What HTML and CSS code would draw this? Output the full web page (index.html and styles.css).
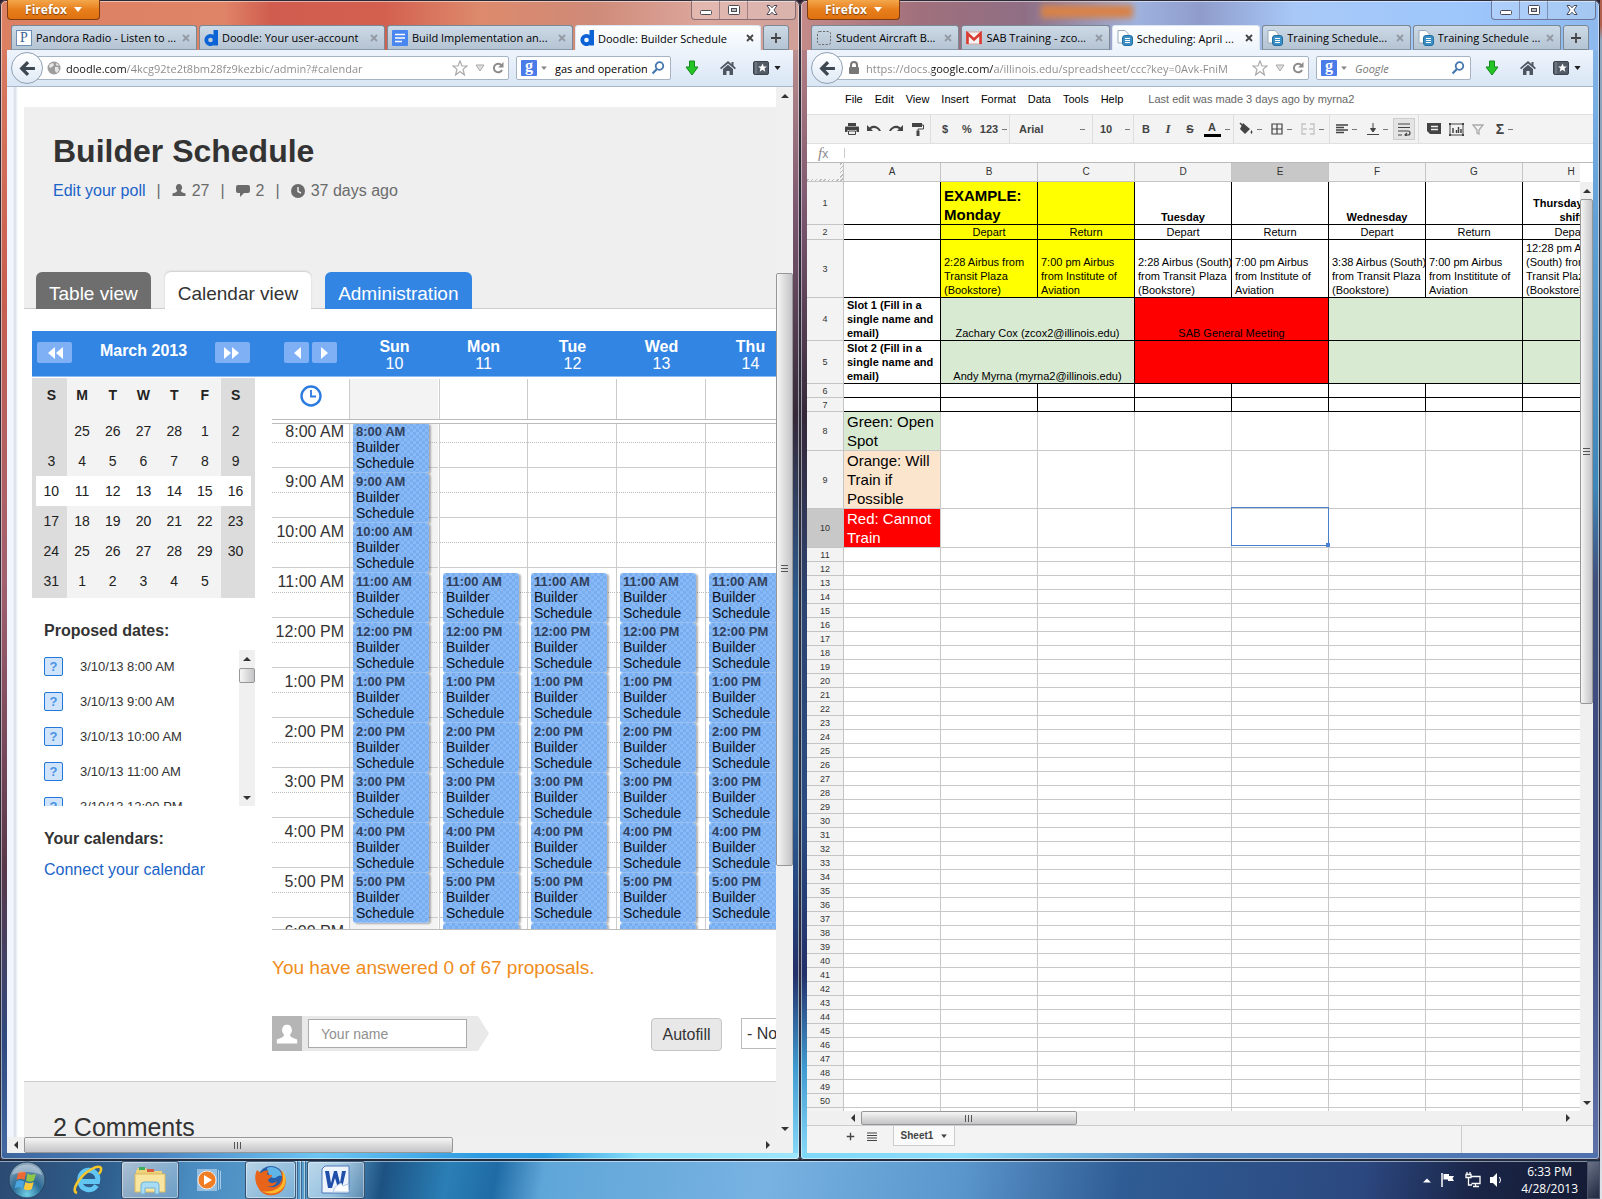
FILE: index.html
```html
<!DOCTYPE html>
<html lang="en">
<head>
<meta charset="utf-8">
<title>Builder Schedule</title>
<link rel="stylesheet" href="styles.css">
</head>
<body>
<svg width="0" height="0" class="defs" aria-hidden="true">
  <symbol id="i-min" viewBox="0 0 14 14"><rect x="1.500" y="7.500" width="11" height="4" rx="1" fill="#fff" stroke="#4a4a55"/></symbol>
  <symbol id="i-max" viewBox="0 0 14 14"><rect x="1.500" y="2.500" width="11" height="9" rx="1" fill="#fff" stroke="#4a4a55"/><rect x="4.500" y="5.500" width="5" height="3" fill="#bbb" stroke="#4a4a55"/></symbol>
  <symbol id="i-close" viewBox="0 0 14 14"><path d="M2 2.500h3l2 2.300 2-2.300h3L9 7l3 4.500H9L7 9.200 5 11.500H2L5 7z" fill="#fff" stroke="#4a4a55"/></symbol>
  <symbol id="i-x" viewBox="0 0 8 8"><path d="M1 1l6 6M7 1L1 7" stroke="currentColor" stroke-width="1.800"/></symbol>
  <symbol id="i-plus" viewBox="0 0 12 12"><path d="M6 1v10M1 6h10" stroke="currentColor" stroke-width="1.800"/></symbol>
  <symbol id="i-back" viewBox="0 0 16 16"><path d="M15 8H3M8.500 2L2.500 8l6 6" fill="none" stroke="#3c4752" stroke-width="3"/></symbol>
  <symbol id="i-globe" viewBox="0 0 14 14"><circle cx="7" cy="7" r="6.500" fill="#9d9d9d"/><path d="M3 3l3-1 1 2-2 2-2 1-1-2zM8 6l3 0 1 3-2 3-2-2zM9 2l3 2-1 1-2-1z" fill="#e6e6e6"/></symbol>
  <symbol id="i-lock" viewBox="0 0 12 14"><path d="M3 7V4a3 3 0 0 1 6 0v3" fill="none" stroke="#777" stroke-width="2"/><rect x="1" y="6" width="10" height="7" rx="1" fill="#777"/></symbol>
  <symbol id="i-star" viewBox="0 0 16 16"><path d="M8 1l2 5h5l-4 3.400L12.500 15 8 11.600 3.500 15 5 9.400 1 6h5z" fill="#fff" stroke="#aaa" stroke-width="1.200"/></symbol>
  <symbol id="i-tri" viewBox="0 0 10 8"><path d="M1 1h8L5 7z" fill="#ddd" stroke="#aaa"/></symbol>
  <symbol id="i-caret" viewBox="0 0 8 5"><path d="M0 0h8L4 5z" fill="currentColor"/></symbol>
  <symbol id="i-reload" viewBox="0 0 12 12"><path d="M9.500 3.300A4.300 4.300 0 1 0 10 8" fill="none" stroke="#8b8b8b" stroke-width="2"/><path d="M11.500 0v5.500H6z" fill="#8b8b8b"/></symbol>
  <symbol id="i-search" viewBox="0 0 14 14"><circle cx="8.500" cy="5" r="3.800" fill="#fff" stroke="#4477b0" stroke-width="1.800"/><path d="M6 8l-4.500 4.500" stroke="#4477b0" stroke-width="2.200"/></symbol>
  <symbol id="i-down" viewBox="0 0 14 16"><path d="M4.500 1h5v6H13L7 15 1 7h3.500z" fill="#24c426" stroke="#118a18"/></symbol>
  <symbol id="i-home" viewBox="0 0 16 16"><path d="M0 8l8-7 8 7-1.200 1.200L8 3.400 1.200 9.200z" fill="#4c5560"/><path d="M3 9l5-4.200L13 9v6h-3.500v-4h-3v4H3z" fill="#4c5560"/><rect x="11.500" y="2" width="2" height="4" fill="#4c5560"/></symbol>
  <symbol id="i-mark" viewBox="0 0 16 14"><rect x=".5" y=".5" width="15" height="13" rx="1.500" fill="#525b66" stroke="#3b444d"/><path d="M3 1v12" stroke="#8b939b"/><path d="M9.500 2.500l1.300 3h3l-2.300 2 .8 3.200-2.800-1.900-2.800 1.900.8-3.200-2.300-2h3z" fill="#fff"/></symbol>
  <symbol id="i-doodle" viewBox="0 0 14 16"><path d="M9.500 0H14v15.500H9.500z" fill="#0d63d6"/><circle cx="6.500" cy="10" r="4.200" fill="none" stroke="#0d63d6" stroke-width="3.800"/></symbol>
  <symbol id="i-doc" viewBox="0 0 16 16"><rect width="16" height="16" rx="1" fill="#4a86f0"/><path d="M3 4.500h10M3 8h10M3 11.500h7" stroke="#fff" stroke-width="1.500"/></symbol>
  <symbol id="i-dash" viewBox="0 0 16 16"><rect x="1.500" y="1.500" width="13" height="13" rx="2" fill="none" stroke="#666" stroke-dasharray="2 1.500"/></symbol>
  <symbol id="i-mail" viewBox="0 0 16 14"><rect x=".5" y="1" width="15" height="12" fill="#f7f3f3" stroke="#d8a5a0"/><path d="M1.500 13V2.500L8 8.500l6.500-6V13" fill="none" stroke="#d93a32" stroke-width="2.600"/></symbol>
  <symbol id="i-sheet" viewBox="0 0 16 16"><path d="M1 .5h7l3 3V13H1z" fill="#fff" stroke="#9aa9b8"/><rect x="5.500" y="5.500" width="10" height="10" rx="2.500" fill="#3c8fc4" stroke="#1f6fa5"/><path d="M8 8.500h5M8 10.500h5M8 12.500h5" stroke="#fff"/></symbol>
  <symbol id="i-up" viewBox="0 0 8 4"><path d="M0 4l4-4 4 4z" fill="#333"/></symbol>
  <symbol id="i-user" viewBox="0 0 14 14"><path d="M7 0a3 3.500 0 0 1 2 6.200c0 1.500.3 2 4.500 3.300V12H.5V9.500C4.700 8.200 5 7.700 5 6.200A3 3.500 0 0 1 7 0z" fill="currentColor"/></symbol>
  <symbol id="i-chat" viewBox="0 0 14 12"><path d="M2 0h10a2 2 0 0 1 2 2v4a2 2 0 0 1-2 2H8l-4 4V8H2a2 2 0 0 1-2-2V2a2 2 0 0 1 2-2z" fill="#6b6b6b"/></symbol>
  <symbol id="i-time" viewBox="0 0 14 14"><circle cx="7" cy="7" r="7" fill="#6b6b6b"/><path d="M7 3v4.500l3 1.500" fill="none" stroke="#eee" stroke-width="1.500"/></symbol>
  <symbol id="i-clock" viewBox="0 0 22 22"><circle cx="11" cy="11" r="9.500" fill="#fff" stroke="#2c7be0" stroke-width="2.400"/><path d="M11 5v6.500h5" fill="none" stroke="#2c7be0" stroke-width="1.800"/></symbol>
  <symbol id="i-prev" viewBox="0 0 8 12"><path d="M8 0v12L1 6z" fill="#fff"/></symbol>
  <symbol id="i-next" viewBox="0 0 8 12"><path d="M0 0v12l7-6z" fill="#fff"/></symbol>
</svg>

<main class="desktop">
<section class="window warm">
  <header class="titlebar">
    <button class="app-menu">Firefox <svg width="8" height="5"><use href="#i-caret"/></svg></button>
    <div class="caption">
      <button aria-label="Minimize"><svg width="14" height="14"><use href="#i-min"/></svg></button>
      <button aria-label="Maximize"><svg width="14" height="14"><use href="#i-max"/></svg></button>
      <button aria-label="Close" class="wide"><svg width="14" height="14"><use href="#i-close"/></svg></button>
    </div>
  </header>
  <nav class="tabs">
    <a href="#" class="tab"><span class="fav-p">P</span><span class="tab-text">Pandora Radio - Listen to ...</span><svg width="8" height="8"><use href="#i-x"/></svg></a>
    <a href="#" class="tab"><svg width="14" height="16"><use href="#i-doodle"/></svg><span class="tab-text">Doodle: Your user-account</span><svg width="8" height="8"><use href="#i-x"/></svg></a>
    <a href="#" class="tab"><svg width="16" height="16"><use href="#i-doc"/></svg><span class="tab-text">Build Implementation an...</span><svg width="8" height="8"><use href="#i-x"/></svg></a>
    <a href="#" class="tab active"><svg width="14" height="16"><use href="#i-doodle"/></svg><span class="tab-text">Doodle: Builder Schedule</span><svg width="8" height="8"><use href="#i-x"/></svg></a>
    <button class="new-tab" aria-label="New tab"><svg width="12" height="12"><use href="#i-plus"/></svg></button>
  </nav>
  <div class="navbar">
    <button class="back" aria-label="Back"><svg width="17" height="17"><use href="#i-back"/></svg></button>
    <div class="urlbar"><svg width="14" height="14"><use href="#i-globe"/></svg><input class="url url-doodle" aria-label="Address" value="doodle.com/4kcg92te2t8bm28fz9kezbic/admin?#calendar"><svg width="16" height="16"><use href="#i-star"/></svg><svg width="10" height="8"><use href="#i-tri"/></svg><svg width="12" height="12"><use href="#i-reload"/></svg></div>
    <div class="searchbar"><span class="fav-g">g</span><svg class="muted" width="6" height="4" viewBox="0 0 8 5"><use href="#i-caret"/></svg><input aria-label="Search" value="gas and operation"><svg width="14" height="14"><use href="#i-search"/></svg></div>
    <div class="actions">
      <button aria-label="Downloads"><svg width="14" height="16"><use href="#i-down"/></svg></button>
      <button aria-label="Home"><svg width="16" height="16"><use href="#i-home"/></svg></button>
      <button aria-label="Bookmarks" class="marks"><svg width="16" height="14"><use href="#i-mark"/></svg><svg width="7" height="4" viewBox="0 0 8 5"><use href="#i-caret"/></svg></button>
    </div>
  </div>
  <div class="content scroll-area">
    <div class="page">
      <div class="poll">
        <header class="poll-head">
          <h1>Builder Schedule</h1>
          <div class="meta"><a href="#">Edit your poll</a><span>|</span><span class="stat"><svg width="14" height="14"><use href="#i-user"/></svg>27</span><span>|</span><span class="stat"><svg width="14" height="12"><use href="#i-chat"/></svg>2</span><span>|</span><span class="stat"><svg width="14" height="14"><use href="#i-time"/></svg>37 days ago</span></div>
          <nav class="views"><a href="#" class="dark">Table view</a><a href="#" class="current">Calendar view</a><a href="#" class="blue">Administration</a></nav>
        </header>
        <div class="planner">
          <div class="cal-bar">
            <div class="month-nav">
              <button aria-label="Previous month"><svg width="8" height="12"><use href="#i-prev"/></svg><svg width="8" height="12"><use href="#i-prev"/></svg></button>
              <strong>March 2013</strong>
              <button aria-label="Next month"><svg width="8" height="12"><use href="#i-next"/></svg><svg width="8" height="12"><use href="#i-next"/></svg></button>
            </div>
            <div class="week-head">
              <div class="week-nav"><button aria-label="Previous week"><svg width="8" height="12"><use href="#i-prev"/></svg></button><button aria-label="Next week"><svg width="8" height="12"><use href="#i-next"/></svg></button></div>
              <div class="day"><b>Sun</b>10</div><div class="day"><b>Mon</b>11</div><div class="day"><b>Tue</b>12</div><div class="day"><b>Wed</b>13</div><div class="day"><b>Thu</b>14</div>
            </div>
          </div>
          <div class="cal-main">
            <aside class="side">
              <div class="mini">
                <table>
                  <thead><tr><th>S</th><th>M</th><th>T</th><th>W</th><th>T</th><th>F</th><th>S</th></tr></thead>
                  <tbody>
                    <tr><td></td><td>25</td><td>26</td><td>27</td><td>28</td><td>1</td><td>2</td></tr>
                    <tr><td>3</td><td>4</td><td>5</td><td>6</td><td>7</td><td>8</td><td>9</td></tr>
                    <tr class="week-row"><td>10</td><td>11</td><td>12</td><td>13</td><td>14</td><td>15</td><td>16</td></tr>
                    <tr><td>17</td><td>18</td><td>19</td><td>20</td><td>21</td><td>22</td><td>23</td></tr>
                    <tr><td>24</td><td>25</td><td>26</td><td>27</td><td>28</td><td>29</td><td>30</td></tr>
                    <tr><td>31</td><td>1</td><td>2</td><td>3</td><td>4</td><td>5</td><td></td></tr>
                  </tbody>
                </table>
              </div>
              <h2>Proposed dates:</h2>
              <div class="dates">
                <ul>
                  <li><button>?</button>3/10/13 8:00 AM</li>
                  <li><button>?</button>3/10/13 9:00 AM</li>
                  <li><button>?</button>3/10/13 10:00 AM</li>
                  <li><button>?</button>3/10/13 11:00 AM</li>
                  <li><button>?</button>3/10/13 12:00 PM</li>
                </ul>
                <div class="vbar dates-bar"><i class="end"><svg width="8" height="4"><use href="#i-up"/></svg></i><i class="gap-a"></i><i class="thumb"></i><i class="gap-b"></i><i class="end flip"><svg width="8" height="4"><use href="#i-up"/></svg></i></div>
              </div>
              <h2>Your calendars:</h2>
              <a href="#" class="connect">Connect your calendar</a>
            </aside>
            <div class="week">
              <div class="allday"><div class="when"><svg width="22" height="22"><use href="#i-clock"/></svg></div><div class="col today"></div><div class="col"></div><div class="col"></div><div class="col"></div><div class="col"></div></div>
              <div class="hours" id="hours"></div>
              <p class="answered">You have answered 0 of 67 proposals.</p>
              <div class="reply">
                <div class="avatar"><svg width="22" height="24" viewBox="0 0 14 12"><use href="#i-user" width="14" height="14"/></svg></div>
                <div class="name"><input aria-label="Your name" placeholder="Your name"></div>
                <svg class="point" width="11" height="35" viewBox="0 0 11 35"><path d="M0 0l11 17.500L0 35z" fill="#e9e9e9"/></svg>
                <button class="autofill">Autofill</button>
                <select aria-label="Calendar"><option>- No calendar -</option></select>
              </div>
            </div>
          </div>
        </div>
        <section class="comments"><h2>2 Comments</h2></section>
      </div>
    </div>
    <div class="vbar page-v"><i class="end"><svg width="8" height="4"><use href="#i-up"/></svg></i><i class="gap-a"></i><i class="thumb grip"></i><i class="gap-b"></i><i class="end flip"><svg width="8" height="4"><use href="#i-up"/></svg></i></div>
    <div class="hbar page-h"><i class="end left"><svg width="8" height="4"><use href="#i-up"/></svg></i><i class="thumb grip"></i><i class="gap-b"></i><i class="end right"><svg width="8" height="4"><use href="#i-up"/></svg></i></div>
  </div>
</section>

<section class="window cool">
  <header class="titlebar">
    <button class="app-menu">Firefox <svg width="8" height="5"><use href="#i-caret"/></svg></button>
    <span class="ghost"></span>
    <div class="caption">
      <button aria-label="Minimize"><svg width="14" height="14"><use href="#i-min"/></svg></button>
      <button aria-label="Maximize"><svg width="14" height="14"><use href="#i-max"/></svg></button>
      <button aria-label="Close" class="wide"><svg width="14" height="14"><use href="#i-close"/></svg></button>
    </div>
  </header>
  <nav class="tabs">
    <a href="#" class="tab"><svg width="16" height="16"><use href="#i-dash"/></svg><span class="tab-text">Student Aircraft B...</span><svg width="8" height="8"><use href="#i-x"/></svg></a>
    <a href="#" class="tab"><svg width="16" height="14"><use href="#i-mail"/></svg><span class="tab-text">SAB Training - zco...</span><svg width="8" height="8"><use href="#i-x"/></svg></a>
    <a href="#" class="tab active"><svg width="16" height="16"><use href="#i-sheet"/></svg><span class="tab-text">Scheduling: April ...</span><svg width="8" height="8"><use href="#i-x"/></svg></a>
    <a href="#" class="tab"><svg width="16" height="16"><use href="#i-sheet"/></svg><span class="tab-text">Training Schedule...</span><svg width="8" height="8"><use href="#i-x"/></svg></a>
    <a href="#" class="tab"><svg width="16" height="16"><use href="#i-sheet"/></svg><span class="tab-text">Training Schedule ...</span><svg width="8" height="8"><use href="#i-x"/></svg></a>
    <button class="new-tab" aria-label="New tab"><svg width="12" height="12"><use href="#i-plus"/></svg></button>
  </nav>
  <div class="navbar">
    <button class="back" aria-label="Back"><svg width="17" height="17"><use href="#i-back"/></svg></button>
    <div class="urlbar"><svg width="14" height="14" viewBox="0 0 12 14"><use href="#i-lock" width="12" height="14"/></svg><input class="url url-docs" aria-label="Address" value="https://docs.google.com/a/illinois.edu/spreadsheet/ccc?key=0Avk-FniM"><svg width="16" height="16"><use href="#i-star"/></svg><svg width="10" height="8"><use href="#i-tri"/></svg><svg width="12" height="12"><use href="#i-reload"/></svg></div>
    <div class="searchbar"><span class="fav-g">g</span><svg class="muted" width="6" height="4" viewBox="0 0 8 5"><use href="#i-caret"/></svg><input aria-label="Search" placeholder="Google"><svg width="14" height="14"><use href="#i-search"/></svg></div>
    <div class="actions">
      <button aria-label="Downloads"><svg width="14" height="16"><use href="#i-down"/></svg></button>
      <button aria-label="Home"><svg width="16" height="16"><use href="#i-home"/></svg></button>
      <button aria-label="Bookmarks" class="marks"><svg width="16" height="14"><use href="#i-mark"/></svg><svg width="7" height="4" viewBox="0 0 8 5"><use href="#i-caret"/></svg></button>
    </div>
  </div>
  <div class="content docs">
    <div class="menu"><button>File</button><button>Edit</button><button>View</button><button>Insert</button><button>Format</button><button>Data</button><button>Tools</button><button>Help</button><span>Last edit was made 3 days ago by myrna2</span></div>
    <div class="toolbar">
      <div class="group first">
        <button aria-label="Print"><svg width="14" height="12" viewBox="0 0 14 12"><path d="M3 0h8v3H3zM1 3.500h12a1 1 0 0 1 1 1V9h-2.500V7h-9v2H0V4.500a1 1 0 0 1 1-1z" fill="#444"/><path d="M3.500 8h7v3.500h-7z" fill="#eee" stroke="#444"/></svg></button>
        <button aria-label="Undo"><svg width="14" height="12" viewBox="0 0 14 12"><path d="M0 2v6h6L4 6c3-2 6-1 8 2h2C12 3 6 1 2.500 4.500z" fill="#444"/></svg></button>
        <button aria-label="Redo"><svg width="14" height="12" viewBox="0 0 14 12"><path d="M14 2v6H8l2-2C7 4 4 5 2 8H0c2-5 8-7 11.500-3.500z" fill="#444"/></svg></button>
        <button aria-label="Paint format"><svg width="12" height="14" viewBox="0 0 12 14"><path d="M0 1h10v4H0z" fill="#444"/><path d="M10 3h1.500v4H6v2" fill="none" stroke="#444"/><path d="M4.500 8.500h3V14h-3z" fill="#444"/></svg></button>
      </div>
      <div class="group numbers"><button>$</button><button>%</button><button class="pick">123<i></i></button></div>
      <div class="group"><button class="pick font">Arial<i></i></button></div>
      <div class="group"><button class="pick size">10<i></i></button></div>
      <div class="group"><button class="bold">B</button><button class="ital">I</button><button class="strike">S</button><button class="pick"><u>A</u><i></i></button></div>
      <div class="group">
        <button class="pick" aria-label="Fill"><svg width="14" height="14" viewBox="0 0 14 14"><path d="M4 1l7 6-5 5-5-5z" fill="#444"/><path d="M1 1l5 5" stroke="#444" stroke-width="1.500"/><path d="M12.500 8c2 3 0 4 0 4s-2-1 0-4z" fill="#444"/></svg><i></i></button>
        <button class="pick" aria-label="Borders"><svg width="12" height="12" viewBox="0 0 12 12"><path d="M1 1h10v10H1zM6 1v10M1 6h10" fill="none" stroke="#444" stroke-width="1.200"/></svg><i></i></button>
        <button class="pick" aria-label="Merge"><svg width="14" height="12" viewBox="0 0 14 12"><path d="M5 1H1v10h4M9 1h4v10H9M2 6h4M8 6h4" fill="none" stroke="#c5c5c5" stroke-width="1.400"/></svg><i></i></button>
      </div>
      <div class="group">
        <button class="pick" aria-label="Align"><svg width="12" height="10" viewBox="0 0 12 10"><path d="M0 1h12M0 3.500h8M0 6h12M0 8.500h8" stroke="#444" stroke-width="1.300"/></svg><i></i></button>
        <button class="pick" aria-label="Vertical align"><svg width="12" height="12" viewBox="0 0 12 12"><path d="M0 11.500h12" stroke="#444"/><path d="M6 0v6M3.500 5.500h5L6 9z" stroke="#444" fill="#444"/></svg><i></i></button>
        <button class="wrap" aria-label="Wrap"><svg width="13" height="13" viewBox="0 0 13 13"><path d="M0 1h12M0 4.500h12M0 8h10a2 2 0 0 1 0 4H7M0 12h4M9 10l-2 2 2 1.500" fill="none" stroke="#444" stroke-width="1.200"/></svg></button>
      </div>
      <div class="group last">
        <button aria-label="Comment"><svg width="14" height="12" viewBox="0 0 14 12"><path d="M0 0h14v11H3L0 8z" fill="#444"/><path d="M4 3.500h7M4 6.500h7" stroke="#eee" stroke-width="1.300"/></svg></button>
        <button aria-label="Chart"><svg width="15" height="13" viewBox="0 0 15 13"><rect x="1" y="1" width="13" height="11" fill="none" stroke="#444"/><path d="M4 5v5M7.500 7v3M9.500 4v6M12 6v4" stroke="#444" stroke-width="1.500"/><path d="M0 0h2v2H0zM13 0h2v2h-2zM0 11h2v2H0zM13 11h2v2h-2z" fill="#444"/></svg></button>
        <button aria-label="Filter"><svg width="12" height="11" viewBox="0 0 12 11"><path d="M1 1h10L7 6v4L5 9V6z" fill="none" stroke="#aaa" stroke-width="1.300"/></svg></button>
        <button class="pick sum">Σ<i></i></button>
      </div>
    </div>
    <div class="fx"><label for="formula"><i>f</i>x</label><input id="formula"></div>
    <div class="grid-area">
      <div class="sheet">
        <table>
          <colgroup><col class="c0"><col><col><col><col><col><col><col><col></colgroup>
          <thead><tr><th class="corner"></th><th>A</th><th>B</th><th>C</th><th>D</th><th class="sel">E</th><th>F</th><th>G</th><th>H</th></tr></thead>
          <tbody id="rows">
            <tr class="k h43"><th>1</th><td></td><td class="yl big"><b>EXAMPLE:<br>Monday</b></td><td class="yl"></td><td class="day1"><b>Tuesday</b></td><td></td><td class="day1"><b>Wednesday</b></td><td></td><td class="day1"><b>Thursday (1st)<br>shift</b></td></tr>
            <tr class="k h15 mid"><th>2</th><td></td><td class="yl">Depart</td><td class="yl">Return</td><td>Depart</td><td>Return</td><td>Depart</td><td>Return</td><td>Depart</td></tr>
            <tr class="k h58"><th>3</th><td></td><td class="yl">2:28 Airbus from<br>Transit Plaza<br>(Bookstore)</td><td class="yl">7:00 pm Airbus<br>from Institute of<br>Aviation</td><td>2:28 Airbus (South)<br>from Transit Plaza<br>(Bookstore)</td><td>7:00 pm Airbus<br>from Institute of<br>Aviation</td><td>3:38 Airbus (South)<br>from Transit Plaza<br>(Bookstore)</td><td>7:00 pm Airbus<br>from Instititute of<br>Aviation</td><td>12:28 pm Airbus<br>(South) from<br>Transit Plaza<br>(Bookstore)</td></tr>
            <tr class="k h43 mid"><th>4</th><td class="slot">Slot 1 (Fill in a<br>single name and<br>email)</td><td colspan="2" class="gr">Zachary Cox (zcox2@illinois.edu)</td><td colspan="2" class="rd">SAB General Meeting</td><td colspan="2" class="gr"></td><td class="gr"></td></tr>
            <tr class="k h43 mid"><th>5</th><td class="slot">Slot 2 (Fill in a<br>single name and<br>email)</td><td colspan="2" class="gr">Andy Myrna (myrna2@illinois.edu)</td><td colspan="2" class="rd"></td><td colspan="2" class="gr"></td><td class="gr"></td></tr>
            <tr class="k"><th>6</th><td></td><td></td><td></td><td></td><td></td><td></td><td></td><td></td></tr>
            <tr class="k"><th>7</th><td></td><td></td><td></td><td></td><td></td><td></td><td></td><td></td></tr>
            <tr class="h39"><th>8</th><td class="gr big">Green: Open<br>Spot</td><td></td><td></td><td></td><td></td><td></td><td></td><td></td></tr>
            <tr class="h58"><th>9</th><td class="or big">Orange: Will<br>Train if<br>Possible</td><td></td><td></td><td></td><td></td><td></td><td></td><td></td></tr>
            <tr class="h39"><th class="sel">10</th><td class="rd light big">Red: Cannot<br>Train</td><td></td><td></td><td></td><td class="cursor"></td><td></td><td></td><td></td></tr>
          </tbody>
        </table>
      </div>
      <div class="vbar sheet-v"><i class="end"><svg width="8" height="4"><use href="#i-up"/></svg></i><i class="thumb grip"></i><i class="gap-b"></i><i class="end flip"><svg width="8" height="4"><use href="#i-up"/></svg></i></div>
    </div>
    <div class="hbar sheet-h"><i class="end left"><svg width="8" height="4"><use href="#i-up"/></svg></i><i class="thumb grip"></i><i class="gap-b"></i><i class="end right"><svg width="8" height="4"><use href="#i-up"/></svg></i></div>
    <footer class="sheets">
      <button aria-label="Add sheet"><svg width="9" height="9" viewBox="0 0 12 12"><use href="#i-plus"/></svg></button>
      <button aria-label="All sheets"><svg width="10" height="9" viewBox="0 0 10 9"><path d="M0 1h10M0 3.500h10M0 6h10M0 8.500h10" stroke="#444"/></svg></button>
      <button class="sheet-tab">Sheet1 <svg width="6" height="4" viewBox="0 0 8 5"><use href="#i-caret"/></svg></button>
      <span class="tail"></span>
    </footer>
  </div>
</section>
</main>

<footer class="taskbar">
  <button class="task" aria-label="Start"><svg width="38" height="38" viewBox="0 0 38 38"><defs><radialGradient id="orb" cx=".5" cy=".9" r=".9"><stop offset="0" stop-color="#6fd0e8"/><stop offset=".45" stop-color="#2b6a94"/><stop offset="1" stop-color="#8fa9bf"/></radialGradient></defs><circle cx="19" cy="19" r="18" fill="url(#orb)" stroke="#27425f"/><path d="M10 12c3-2 5-2 8 0l-1.500 7c-3-1.600-5-1.600-8 0z" fill="#ee6a35"/><path d="M19.500 12.500c3 1.600 5 1.600 8.500 0l-2 7c-3 1.600-5 1.600-8 0z" fill="#8fc647"/><path d="M8.200 20.500c3-1.800 5-1.600 8 0l-1.700 7c-3-1.600-5-1.600-8 0z" fill="#4aa5e0"/><path d="M17.500 21c3 1.600 5 1.600 8.200 0l-2 7c-3 1.600-5 1.600-8 0z" fill="#fcc93c"/><path d="M4 14c3-14 27-14 30 0-9-4-21-4-30 0z" fill="#fff" opacity=".35"/></svg></button>
  <button class="task ie" aria-label="Internet Explorer"><svg width="32" height="32" viewBox="0 0 32 32"><path d="M8 18a9 9 0 0 0 16.500 3.500M8 17.500h17.500A9 9 0 1 0 8 17z" fill="none" stroke="#62c6f4" stroke-width="5"/><path d="M5 29C-2 27 8 12 18 6s14-3 9 4" fill="none" stroke="#f5c62c" stroke-width="2.600"/></svg></button>
  <button class="task open files" aria-label="Explorer"><svg width="32" height="30" viewBox="0 0 32 30"><path d="M2 6l2-3h8l2 3h14v18H2z" fill="#eed27a"/><path d="M5 2h6v3H5z" fill="#3fae5c"/><path d="M13 4h7v3h-7z" fill="#d85a3c"/><path d="M1 9h30v18H1z" fill="#f8e6a0" stroke="#dcb95c"/><path d="M7 29v-9q0-3 3-3h12q3 0 3 3v9h-4v-6H11v6z" fill="#a8dcf4" stroke="#6eb2d8"/></svg></button>
  <button class="task wmp" aria-label="Media Player"><svg width="26" height="24" viewBox="0 0 26 24"><path d="M1 1h20v22H1z" fill="#a8cbe8" opacity=".8"/><path d="M22.500 2v20M24.500 3v18" stroke="#a8cbe8"/><circle cx="11" cy="12" r="9" fill="#f07c24" stroke="#fff" stroke-width=".8"/><path d="M8 7l8 5-8 5z" fill="#fff"/></svg></button>
  <button class="task open fox" aria-label="Firefox"><svg width="32" height="32" viewBox="0 0 32 32"><circle cx="16" cy="15" r="13" fill="#2760a8"/><path d="M12 4c6-3 14 1 15 8-4-2-5 2-8 2s-6-4-7-10z" fill="#5fb4e8"/><path d="M2 6l4 3c2-2 5-3 8-2-2 1-2 3-1 4h4c0 3-3 3-4 5 1 4 6 4 9 1-1 5-7 7-11 4 6 5 16 1 16-8 0-3-1-5-2-7 8 6 7 16 2 21-7 7-19 5-23-2C0 19-1 12 2 6z" fill="#e8641b"/><path d="M27 6c6 7 4 16-1 20-6 5-14 4-19 1 9 2 20-2 21-11 0-4 0-7-1-10z" fill="#fbb92c"/></svg></button>
  <span class="stack"></span>
  <button class="task open word" aria-label="Word"><svg width="30" height="30" viewBox="0 0 30 30"><path d="M4 1h24v27H1V4z" fill="#eef4fd" stroke="#4c78b8"/><path d="M4 6h4l2 12 3-12h3l3 12 2-12h4l-4 17h-4l-3-10-3 10H7z" fill="#1f4fa8"/><path d="M14 22l6-4 2 3 5-2 1 8H12z" fill="#fff" stroke="#b5c8e4"/></svg></button>
  <div class="tray">
    <svg width="8" height="5" viewBox="0 0 8 4"><path d="M0 4l4-4 4 4z" fill="#fff"/></svg>
    <svg width="16" height="16" viewBox="0 0 16 16"><path d="M2 1v14" stroke="#fff" stroke-width="1.500"/><path d="M3.500 2H9v2h5l-1.500 2.500L14 9H8V7.500H3.500z" fill="#fff"/></svg>
    <svg width="16" height="16" viewBox="0 0 16 16"><path d="M6 4.500h9v7H6.500M8 14.500h6M10.500 12v2M1 2.500h5v3H1zM2 0v2M5 0v2M3.500 6v7H7" fill="none" stroke="#fff" stroke-width="1.300"/></svg>
    <svg width="14" height="16" viewBox="0 0 14 16"><path d="M0 5h3l4-4v14l-4-4H0z" fill="#fff"/><path d="M9.500 5q2 3 0 6" fill="none" stroke="#fff"/></svg>
    <div class="clock"><time>6:33 PM</time><time>4/28/2013</time></div>
    <button class="peek" aria-label="Show desktop"></button>
  </div>
</footer>
<script src="app.js"></script>
</body>
</html>
```
FILE: styles.css
```css
* { box-sizing: border-box; }
body {
  margin: 0;
  height: 100vh;
  display: grid;
  grid-template-rows: minmax(0, 1fr) 39px;
  padding-right: 2px;
  background: linear-gradient(#b0604c 25px, #8fa6bd 40px, #7f97b4 60%, #dfe3e8);
  font-family: "Liberation Sans", Arial, sans-serif;
  overflow: hidden;
}
button, input, select { font: inherit; color: inherit; margin: 0; padding: 0; border: 0; background: none; border-radius: 0; outline: 0; }
button { display: flex; align-items: center; justify-content: center; }
a { color: #1a63c9; text-decoration: none; }
svg { display: block; flex: none; }
.defs { position: absolute; }
h1, h2, p, ul { margin: 0; padding: 0; }

/* windows */
.desktop { display: grid; grid-template-columns: 1fr 1fr; min-height: 0; background: #2a2030; }
.window {
  display: flex; flex-direction: column; min-width: 0; min-height: 0;
  padding: 0 7px 7px;
  border-radius: 6px 6px 4px 4px;
  font-family: "Open Sans", "Noto Sans", sans-serif;
  font-size: 11px;
  color: #000;
  background-repeat: no-repeat;
  background-size: 100% 50px, 100% 7px, 50% 100%, 50% 100%;
  background-position: top, bottom, left, right;
  box-shadow: inset 0 0 0 1px #2b2b38, inset 0 0 0 2px rgba(255, 255, 255, .5);
}
.warm {
  background-image:
    linear-gradient(90deg, #dc8063, #e08468 28%, #cf5c4e 34%, #d3604f 48%, #dd8a6c 60%, #cf8a78 74%, #dca79c 88%, #cf9f98),
    linear-gradient(90deg, #3d659d, #4b86c4 20%, #6cc6f4 40%, #2f9be0 60%, #2a9be0 68%, #8ae0fa 80%, #9ee6fc),
    linear-gradient(#dc8063, #c85f4f 25%, #a26070 50%, #58384a 75%, #2f4a80 90%, #456ba5),
    linear-gradient(#cf9f98, #7c5870 18%, #35283a 36%, #2c5c90 52%, #2b5c92 70%, #23306a 84%, #3f9ad0 92%, #8adcfa);
}
.cool {
  background-image:
    linear-gradient(90deg, #c48a88, #a0707c 15%, #8f6e84 28%, #9fb3df 42%, #8f9ccb 50%, #a8c9f8 62%, #9cc6fb 85%, #8db9ee),
    linear-gradient(90deg, #7ed8f8, #8adcfa 20%, #4f86c0 50%, #4f70ac),
    linear-gradient(#c48a88, #7c5870 18%, #35283a 36%, #2c4470 52%, #2b4c82 70%, #23306a 84%, #3f9ad0 92%, #8adcfa),
    linear-gradient(#8db9ee, #5f9fd4 20%, #3f86b8 42%, #40507c 50%, #3c4a80 75%, #5f72a8);
}
.titlebar { display: flex; justify-content: space-between; height: 25px; flex: none; }
.app-menu {
  width: 93px; height: 20px; gap: 7px;
  color: #fff; font-size: 12px; font-weight: 700; text-shadow: 0 1px 1px #7a3c00;
  background: linear-gradient(#f3a74c, #e87f1c 50%, #df7110);
  border: 1px solid #7f3c10; border-top: 0; border-radius: 0 0 4px 4px;
}
.ghost { width: 92px; height: 13px; margin: 5px auto 0 141px; background: #d88248; filter: blur(3px); }
.caption { display: flex; height: 20px; margin-right: -3px; border: 1px solid rgba(60, 50, 70, .55); border-top: 0; border-radius: 0 0 4px 4px; background: rgba(255, 255, 255, .2); }
.caption button { width: 28px; border-right: 1px solid rgba(60, 50, 70, .4); }
.caption .wide { width: 47px; border: 0; }
.tabs { display: flex; gap: 2px; height: 25px; flex: none; padding: 0 4px; }
.tab {
  flex: 1 1 0; min-width: 0; display: flex; align-items: center; gap: 4px;
  padding: 0 6px 0 4px; color: #000; white-space: nowrap;
  background: linear-gradient(#ccd9e6, #b5c4d3);
  border: 1px solid #7b8793; border-bottom-color: #8898aa; border-radius: 3px 3px 0 0;
}
.tab > svg:last-child { color: #929ba5; }
.tab-text { flex: 1; min-width: 0; overflow: hidden; }
.tab.active { background: linear-gradient(#fdfeff, #eef4fc); border-color: #dbe6f2; border-bottom: 0; }
.tab.active > svg:last-child { color: #444; }
.new-tab { width: 26px; background: linear-gradient(#ccd9e6, #b5c4d3); border: 1px solid #7b8793; border-radius: 3px 3px 0 0; color: #444; }
.fav-p { width: 16px; height: 16px; border: 1px solid #6f8fb5; background: #fff; color: #3a6494; font: 14px/14px "Liberation Serif", serif; text-align: center; }
.fav-g { width: 16px; height: 16px; border-radius: 1px; background: #4a7be8; color: #fff; font: 700 16px/12px "Liberation Serif", serif; text-align: center; }
.navbar { display: flex; align-items: center; height: 37px; flex: none; padding: 0 5px 0 4px; background: linear-gradient(#eef4fc, #d9e6f5); border-bottom: 1px solid #a8b6c8; }
.back { width: 32px; height: 32px; flex: none; border-radius: 50%; border: 1px solid #8fa0b4; background: linear-gradient(#fff, #dfe9f5); z-index: 1; }
.urlbar, .searchbar { display: flex; align-items: center; height: 24px; background: #fff; border: 1px solid #a5b3c3; border-radius: 2px; }
.urlbar { flex: 1; min-width: 0; margin-left: -16px; padding: 0 4px 0 19px; gap: 5px; }
.urlbar svg + svg { margin-left: 2px; }
.url { flex: 1; min-width: 0; height: 22px; color: transparent; -webkit-background-clip: text; background-clip: text; }
.url-doodle { background-image: linear-gradient(90deg, #111 60px, #888 60px); }
.url-docs { background-image: linear-gradient(90deg, #888 66px, #111 66px, #111 127px, #888 127px); }
.searchbar { width: 155px; margin-left: 7px; padding: 0 5px 0 4px; gap: 4px; }
.searchbar input { flex: 1; min-width: 0; padding-left: 4px; }
.searchbar input::placeholder { color: #777; font-style: italic; opacity: 1; }
.muted { color: #888; }
.actions { display: flex; margin-left: 3px; color: #222; }
.actions button { width: 36px; height: 28px; }
.actions .marks { width: 42px; gap: 5px; }
.content { flex: 1; min-height: 0; background: #fff; font-family: "Liberation Sans", Arial, sans-serif; }

/* scroll bars */
.vbar, .hbar { display: flex; background: #f0f0f0; }
.vbar { flex-direction: column; }
.end { display: flex; align-items: center; justify-content: center; flex: 0 0 17px; }
.flip svg { transform: rotate(180deg); }
.left svg { transform: rotate(-90deg); }
.right svg { transform: rotate(90deg); }
.thumb { display: flex; align-items: center; justify-content: center; border: 1px solid #979797; border-radius: 2px; background: linear-gradient(90deg, #f6f6f6, #dcdcdc 50%, #c4c4c8); }
.hbar .thumb { background: linear-gradient(#f6f6f6, #dcdcdc 50%, #c4c4c8); }
.grip::after { content: ""; width: 7px; height: 8px; background: repeating-linear-gradient(#555 0 1px, transparent 1px 3px); }
.hbar .grip::after { width: 8px; height: 7px; background: repeating-linear-gradient(90deg, #555 0 1px, transparent 1px 3px); }
.scroll-area { display: grid; grid-template: minmax(0, 1fr) 16px / minmax(0, 1fr) 17px; background: #f0f0f0; }
.page-v .gap-a { flex: 169; }
.page-v .thumb { flex: 592; }
.page-v .gap-b { flex: 255; }
.page-h .thumb { flex: 428; }
.page-h .gap-b { flex: 307; }

/* poll page */
.page { overflow: hidden; padding-left: 17px; font-size: 16px; color: #333; background: linear-gradient(90deg, #f1f6fe 6px, #d8dee8 8px, #fff 11px); }
.poll { padding-top: 20px; }
.poll-head { display: flex; flex-direction: column; height: 202px; padding: 24px 0 0 12px; background: #efefef; border-bottom: 1px solid #ccc; }
.poll-head h1 { font-size: 32px; line-height: 40px; padding-left: 17px; }
.meta { display: flex; gap: 11px; margin-top: 10px; padding-left: 17px; line-height: 20px; color: #6b6b6b; }
.stat { display: flex; align-items: center; gap: 6px; }
.views { display: flex; gap: 14px; margin: auto 0 -1px; }
.views a { padding: 0 13px; line-height: 43px; height: 37px; font-size: 19px; color: #fff; border-radius: 6px 6px 0 0; white-space: nowrap; }
.views .dark { background: #6e6e6e; }
.views .current { background: #fff; color: #333; box-shadow: 0 -1px 2px #ccc; }
.views .blue { background: #3385e4; }
.planner { padding: 22px 0 30px 8px; border-bottom: 1px solid #ccc; }
.cal-bar { display: flex; height: 46px; color: #fff; background: #3385e4; border-bottom: 1px solid #8cbaf0; overflow: hidden; }
.cal-bar button { height: 21px; width: 35px; border-radius: 2px; background: #7fb0f6; }
.month-nav { flex: 0 0 240px; display: flex; justify-content: space-between; align-items: flex-start; padding: 11px 22px 0 5px; }
.month-nav strong { line-height: 18px; }
.week-head { display: flex; }
.week-nav { flex: 0 0 78px; display: flex; gap: 3px; padding: 11px 0 0 12px; }
.week-nav button { width: 25px; }
.day { flex: 0 0 89px; text-align: center; line-height: 17px; padding-top: 7px; }
.day b { display: block; }
.cal-main { display: flex; gap: 17px; }
.side { flex: 0 0 223px; padding-top: 1px; }
.mini { height: 220px; padding: 0 4px; background: linear-gradient(90deg, #dcdcdc 35px, #f3f3f3 35px, #f3f3f3 189px, #dcdcdc 189px); font-size: 14px; color: #222; }
.mini table { width: 100%; border-collapse: collapse; table-layout: fixed; text-align: center; }
.mini th { height: 38px; padding: 0 0 4px; }
.mini td { height: 30px; padding: 0; }
.mini .week-row { background: #fff; }
.side h2 { font-size: 16px; line-height: 20px; padding-left: 12px; margin-top: 23px; }
.dates { display: flex; height: 156px; margin-top: 9px; overflow: hidden; font-size: 13px; }
.dates ul { flex: 1; list-style: none; padding: 7px 0 0 12px; }
.dates li { display: flex; align-items: center; gap: 17px; height: 19px; margin-bottom: 16px; }
.dates li button { width: 19px; height: 19px; border: 1px solid #2277d8; border-radius: 2px; background: #cfe4fb; color: #4a93e4; font-weight: 700; }
.dates-bar { width: 16px; }
.dates-bar .gap-a { flex: 1; }
.dates-bar .thumb { flex: 0 0 15px; }
.dates-bar .gap-b { flex: 107; }
.connect { display: block; padding: 11px 0 0 12px; line-height: 20px; }
.week { flex: 1; min-width: 0; }
.allday, .hours { display: flex; overflow: hidden; border-bottom: 1px solid #bbb; }
.allday { height: 41px; margin: 2px 0 3px; }
.when { flex: 0 0 77px; display: flex; justify-content: center; padding-top: 6px; }
.col { flex: 0 0 89px; position: relative; border-left: 1px solid #ccc; }
.col:nth-child(3) { flex-basis: 90px; margin-left: 1px; flex-basis: 88px; }
.today { background: #f3f3f3; }
.hours { height: 507px; border-top: 1px solid #bbb; }
.times { flex: 0 0 77px; margin-top: -6px; text-align: right; }
.times .slot { padding-right: 5px; line-height: 27px; }
.hours .col { margin-top: -6px; }
.hours .slot { height: 50px; border-bottom: 1px solid #ccc; background: linear-gradient(90deg, #bbb 50%, transparent 50%) 0 24px / 2px 1px repeat-x; }
.events { position: absolute; top: 5px; left: 3px; width: 76px; }
.from-eleven { top: 155px; }
.event { height: 50px; padding: 1px 0 0 3px; border-radius: 3px; border-bottom: 1px solid #9cc4f7; box-shadow: 2px 1px 2px rgba(0, 0, 0, .3); background: repeating-conic-gradient(#78adf0 0 25%, #8abaf5 0 50%) 0 0 / 6px 6px; font-size: 14px; line-height: 16px; color: #0c1020; }
.event b { display: block; font-size: 13px; line-height: 15px; color: #30405c; }
.answered { margin-top: 26px; font-size: 19px; line-height: 24px; color: #f08c1a; }
.reply { display: flex; margin-top: 36px; height: 35px; overflow: hidden; }
.avatar { flex: 0 0 30px; display: flex; align-items: flex-end; justify-content: center; padding-bottom: 5px; background: #b5b5b5; color: #fff; }
.name { flex: 0 0 176px; padding: 3px 11px 3px 6px; background: #e9e9e9; }
.name input { width: 159px; height: 29px; padding-left: 12px; border: 1px solid #aaa; background: #fff; font-size: 14px; }
.name input::placeholder { color: #909090; opacity: 1; }
.point { margin-right: 162px; }
.autofill { flex: 0 0 71px; height: 33px; margin: 2px 19px 0 0; border: 1px solid #c4c4c4; border-radius: 4px; background: #e8e8e8; }
.reply select { flex: 0 0 140px; height: 31px; margin-top: 2px; padding-left: 5px; border: 1px solid #bbb; background: #fff; appearance: none; }
.comments { background: #efefef; padding: 30px 0 60px 29px; }
.comments h2 { font-size: 25px; line-height: 30px; font-weight: 400; }

/* spreadsheet */
.docs { display: flex; flex-direction: column; font-size: 11px; }
.menu { display: flex; flex: none; height: 27px; padding: 2px 0 0 38px; gap: 12px; align-items: flex-start; line-height: 20px; }
.menu span { color: #666; margin-left: 13px; }
.toolbar { display: flex; flex: none; align-items: center; height: 30px; background: #f3f3f3; border: solid #e0e0e0; border-width: 1px 0; color: #444; font-weight: 700; }
.group { display: flex; align-items: center; height: 28px; padding: 0 1px; border-right: 1px solid #ddd; }
.group button { width: 22px; height: 22px; }
.group.first { padding: 0 1px 0 34px; }
.group.numbers { padding: 0 0 0 3px; }
.group.last { border: 0; padding-left: 4px; }
.group .pick { width: 31px; gap: 4px; }
.pick i { width: 5px; height: 1px; background: #777; }
.group .font { width: 80px; justify-content: space-between; padding: 0 6px 0 8px; }
.group .size { width: 38px; justify-content: space-between; padding: 0 2px 0 6px; }
.ital { font-style: italic; font-family: "Liberation Serif", serif; font-size: 13px; }
.strike { text-decoration: line-through; }
.pick u { text-decoration: none; width: 17px; border-bottom: 3px solid #000; line-height: 13px; }
.group .wrap { border: 1px solid #ccc; background: #e4e4e4; margin-right: 2px; }
.sum { font-size: 14px; }
.fx { display: flex; flex: none; height: 18px; align-items: center; }
.fx label { width: 37px; padding-left: 11px; color: #888; font: 12px/16px "Liberation Sans", sans-serif; }
.fx label i { font: italic 15px/16px "Liberation Serif", serif; }
.fx input { flex: 1; height: 10px; border-left: 1px solid #ccc; }
.grid-area { display: flex; flex: 1; min-height: 0; border-top: 1px solid #bbb; }
.sheet { flex: 1; min-width: 0; overflow: hidden; background: #fff; }
.sheet table { table-layout: fixed; width: 813px; border-collapse: separate; border-spacing: 0; white-space: nowrap; }
.c0 { width: 37px; }
.sheet th { padding: 0; font-size: 9px; font-weight: 400; color: #333; background: #f3f3f3; border: solid #c4c4c4; border-width: 0 1px 1px 0; vertical-align: middle; line-height: 10px; }
.sheet thead th { height: 19px; font-size: 10px; }
.sheet th.sel { background: #c8c8c8; }
.sheet .corner { background: repeating-linear-gradient(135deg, #bbb 0 1px, #f3f3f3 1px 3px); }
.sheet .corner::before { content: ""; display: block; width: 33px; height: 16px; margin-top: -2px; background: #f3f3f3; }
.sheet tbody tr { height: 14px; }
.sheet td { padding: 0 0 0 3px; border: solid #c8c8c8; border-width: 0 1px 1px 0; vertical-align: bottom; line-height: 14px; color: #000; }
.sheet .k td { border-color: #000; }
.sheet .h15 { height: 15px; }
.sheet .h39 { height: 39px; }
.sheet .h43 { height: 43px; }
.sheet .h58 { height: 58px; }
.sheet .mid td, .sheet .day1 { text-align: center; padding: 0; }
.sheet .mid .slot { text-align: left; font-weight: 700; padding-left: 3px; }
.sheet .big { font-size: 15px; line-height: 19px; }
.yl { background: #ff0; }
.gr { background: #d9ead3; }
.or { background: #fce5cd; }
.rd { background: #f00; }
.sheet .light { color: #fff; }
.cursor { position: relative; }
.cursor::before { content: ""; position: absolute; inset: -2px -1px 1px -1px; border: 1px solid #4a80c8; }
.cursor::after { content: ""; position: absolute; right: -2px; bottom: 0; width: 4px; height: 4px; background: #4a80d8; }
.sheet-v { width: 13px; margin-top: 19px; }
.sheet-v .thumb { flex: 504; }
.sheet-v .gap-b { flex: 390; }
.sheet-h { flex: none; height: 14px; padding-left: 37px; padding-right: 17px; }
.sheet-h .thumb { flex: 215; }
.sheet-h .gap-b { flex: 484; }
.sheets { display: flex; flex: none; height: 28px; padding-left: 36px; background: #f3f3f3; border-top: 1px solid #ccc; color: #444; font-size: 10px; font-weight: 700; }
.sheets button { width: 22px; height: 20px; }
.sheets button:first-child { width: 15px; margin-right: 3px; }
.sheets .sheet-tab { width: 62px; gap: 8px; margin-left: 10px; border: 1px solid #ccc; border-top: 0; background: #fafafa; }
.tail { width: 132px; margin-left: auto; border-left: 1px solid #ccc; }

/* taskbar */
.taskbar {
  display: flex; align-items: center; padding-left: 8px; color: #fff; overflow: hidden;
  border-top: 1px solid #1a2a40; box-shadow: inset 0 1px 0 rgba(255, 255, 255, .5);
  background: linear-gradient(100deg, #2c4a72, #2f608f 7%, #4a8cc0 12%, #5ea2d0 21%, #1d5282 24%, #2a7fb6 28%, #1f6ba6 31%, #5fa6d8 34%, #78b2e2 48%, #5a96cc 60%, #2f5c94 70%, #2c4880 85%, #1a2547 92%, #131a33);
}
.task { height: 38px; }
.ie { width: 32px; margin: 0 17px 0 26px; }
.open { border: 1px solid rgba(20, 40, 70, .7); border-radius: 3px; background: linear-gradient(135deg, rgba(255, 255, 255, .6), rgba(255, 255, 255, .2)); box-shadow: inset 0 0 0 1px rgba(255, 255, 255, .4); }
.files { width: 58px; }
.wmp { width: 66px; padding-right: 6px; }
.fox { width: 51px; }
.stack { width: 10px; height: 38px; background: repeating-linear-gradient(90deg, rgba(255, 255, 255, .5) 0 1px, rgba(20, 50, 80, .5) 1px 2px, transparent 2px 4px); }
.word { width: 58px; margin-left: 1px; }
.tray { display: flex; align-items: center; gap: 9px; margin-left: auto; font-family: "Open Sans", sans-serif; font-size: 12px; }
.clock { display: flex; flex-direction: column; align-items: center; line-height: 17px; margin: 0 0 0 8px; }
.peek { width: 13px; height: 38px; background: linear-gradient(135deg, #6a7288, #20283f); border: 1px solid #4a5268; }
```
FILE: app.js
```js
// Hour grid with the proposed slots of each day
const hours = ['8:00 AM', '9:00 AM', '10:00 AM', '11:00 AM', '12:00 PM', '1:00 PM',
  '2:00 PM', '3:00 PM', '4:00 PM', '5:00 PM', '6:00 PM'];
const event = h => `<div class="event"><b>${h}</b>Builder<br>Schedule</div>`;
const slots = hours.map(() => '<div class="slot"></div>').join('');

let html = `<div class="times">${hours.map(h => `<div class="slot">${h}</div>`).join('')}</div>`;
for (let day = 0; day < 5; day++) {
  const own = hours.slice(day === 0 ? 0 : 3, 10).map(event).join('');
  html += `<div class="col${day === 0 ? ' today' : ''}">${slots}
    <div class="events${day === 0 ? '' : ' from-eleven'}">${own}${day === 0 ? '' : '<div class="event"></div>'}</div></div>`;
}
document.getElementById('hours').innerHTML = html;

// Empty rows of the sheet
let rows = '';
for (let n = 11; n <= 51; n++) {
  rows += `<tr><th>${n}</th>${'<td></td>'.repeat(8)}</tr>`;
}
document.getElementById('rows').insertAdjacentHTML('beforeend', rows);
```
